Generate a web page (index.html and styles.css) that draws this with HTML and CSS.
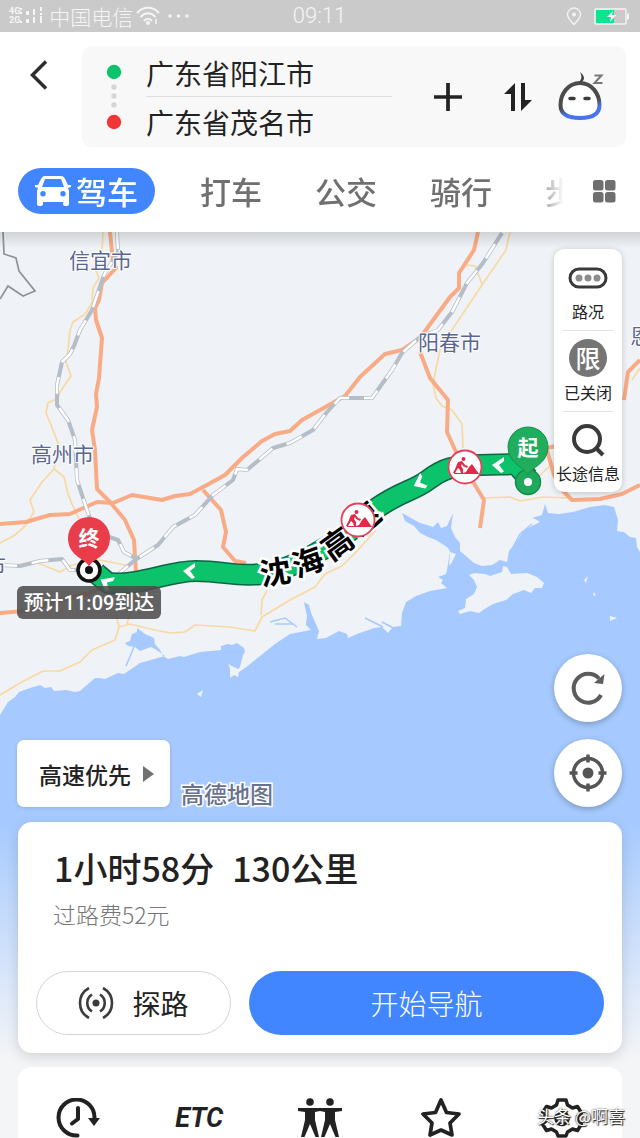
FILE: index.html
```html
<!DOCTYPE html>
<html lang="zh-CN">
<head>
<meta charset="utf-8">
<meta name="viewport" content="width=device-width, initial-scale=1">
<title>路线规划</title>
<link rel="stylesheet" href="styles.css">
</head>
<body>
<div class="status-bar">
  <div class="status-left">
    <span class="network"><span>4G</span><span>2G</span></span>
    <svg class="signal" width="23" height="18" viewBox="0 0 23 18" fill="currentColor" aria-hidden="true"><path d="M0 1h2v2H0zM0 5h2v2H0zM0 14h2v2H0zM6 4h3v4H6zM6 12h3v4H6zM13 2h2v6h-2zM13 10h2v6h-2zM20 0h2v4h-2zM20 6h2v2h-2zM20 9h2v7h-2z"/></svg>
    <span class="carrier">中国电信</span>
    <svg class="wifi" width="24" height="20" viewBox="0 0 24 20" fill="none" stroke="currentColor" stroke-width="2" aria-hidden="true"><path d="M1 7c6-7 16-7 22 0M4.500 11c4.500-5 10.500-5 15 0M8 15c2.500-3 5.500-3 8 0"/><circle cx="12" cy="17" r="1"/><path d="M20 13v5" stroke-width="1.500"/></svg>
    <svg width="22" height="4" viewBox="0 0 22 4" fill="currentColor" aria-hidden="true"><circle cx="2" cy="2" r="1.700"/><circle cx="10.500" cy="2" r="1.700"/><circle cx="19" cy="2" r="1.700"/></svg>
  </div>
  <time class="clock">09:11</time>
  <div class="status-right">
    <svg width="16" height="19" viewBox="0 0 16 19" fill="none" stroke="currentColor" stroke-width="1.300" aria-hidden="true"><path d="M8 17.500C6 15 1.500 11.500 1.500 7.500a6.500 6.500 0 0 1 13 0c0 4-4.500 7.500-6.500 10z"/><circle cx="8" cy="7.500" r="1.300" fill="currentColor"/></svg>
    <svg width="36" height="17" viewBox="0 0 36 17" aria-hidden="true"><rect x="1" y="1" width="31" height="15" rx="1" fill="none" stroke="#f5f5f5" stroke-width="1.400"/><path d="M2 2h18v13H2z" fill="#0be58f"/><path d="M34 5.500v6" stroke="#f5f5f5" stroke-width="2"/><path d="M19 3l-6 6h4l-1 5 6-7h-4z" fill="#fff"/></svg>
  </div>
</div>

<header class="header">
  <div class="search-row">
    <button class="icon-button back" aria-label="返回"><svg width="18" height="30" viewBox="0 0 18 30" fill="none" stroke="#2d2d2d" stroke-width="3.500"><path d="M16 1.500 2.500 15 16 28.500"/></svg></button>
    <div class="route-box">
      <svg class="stops" width="16" height="68" viewBox="0 0 16 68" aria-hidden="true"><circle cx="8" cy="9" r="7.200" fill="#0cc36c"/><g fill="#d6d6d6"><circle cx="8" cy="24" r="2.700"/><circle cx="8" cy="33" r="2.700"/><circle cx="8" cy="42" r="2.700"/></g><circle cx="8" cy="59" r="7.200" fill="#f33434"/></svg>
      <div class="places">
        <input type="text" aria-label="起点" value="广东省阳江市">
        <input type="text" aria-label="终点" value="广东省茂名市">
      </div>
      <div class="route-actions">
        <button class="icon-button" aria-label="添加途经点"><svg width="30" height="30" viewBox="0 0 30 30" stroke="#222" stroke-width="3.700"><path d="M1 15h28M15 1v28"/></svg></button>
        <button class="icon-button" aria-label="交换起终点"><svg width="28" height="30" viewBox="0 0 28 30" fill="#222"><path d="M11 1v28H7V12H0zM17 1h4v17h7L17 29z"/></svg></button>
        <button class="icon-button" aria-label="语音助手"><svg width="46" height="50" viewBox="0 0 46 50"><defs><linearGradient id="face" x1="0" y1="0" x2=".3" y2="1"><stop offset=".68" stop-color="#4c4c4c"/><stop offset=".9" stop-color="#4773f0"/></linearGradient></defs><path d="M22 11c12 0 19.500 11 19.500 22 0 10-8.500 13-19.500 13S2.500 43 2.500 33c0-11 7.500-22 19.500-22z" fill="#fff" stroke="url(#face)" stroke-width="4"/><path d="M21 10c3-3 3-6 1-10 5 4 5 7 2 10z" fill="#444"/><path d="M12 26.500h4M27 26.500h4" stroke="#3b3b3b" stroke-width="3.500" stroke-linecap="round"/><path d="M36.500 3.500h7l-7 7.500h8" fill="none" stroke="#777" stroke-width="2"/></svg></button>
      </div>
    </div>
  </div>
  <div class="tab-row">
    <nav class="tabs" aria-label="出行方式">
      <button class="tab active"><svg width="36" height="30" viewBox="0 0 36 30" fill="currentColor" aria-hidden="true"><path fill-rule="evenodd" d="M10 0h16c2 0 3 1 4 3l3 6h3v2l-3 1 1 3v13c0 1-1 2-2 2h-2c-1 0-2-1-2-2v-2H8v2c0 1-1 2-2 2H4c-1 0-2-1-2-2V15l1-3-3-1V9h3l3-6c1-2 2-3 4-3zm0 3L7 11h22l-3-8zM8 15a2.700 2.700 0 1 0 0 5.400 2.700 2.700 0 0 0 0-5.400zm20 0a2.700 2.700 0 1 0 0 5.400 2.700 2.700 0 0 0 0-5.400z"/></svg>驾车</button>
      <button class="tab">打车</button>
      <button class="tab">公交</button>
      <button class="tab">骑行</button>
      <button class="tab">步行</button>
    </nav>
    <button class="icon-button more" aria-label="更多出行方式"><svg width="24" height="24" viewBox="0 0 24 24" fill="#6f6f6f"><rect x="1" y="1" width="10.500" height="10.500" rx="2.500"/><rect x="13" y="1" width="10.500" height="10.500" rx="2.500"/><rect x="1" y="13" width="10.500" height="10.500" rx="2.500"/><rect x="13" y="13" width="10.500" height="10.500" rx="2.500"/></svg></button>
  </div>
</header>

<main class="map-screen">
  <svg class="map" viewBox="0 232 640 906" preserveAspectRatio="xMidYMin slice" role="img" aria-label="阳江市到茂名市的路线地图">
    <defs>
      <linearGradient id="fade" x1="0" y1="0" x2="0" y2="1"><stop offset="0" stop-color="#f4f5f7" stop-opacity="0"/><stop offset="1" stop-color="#f4f5f7"/></linearGradient>
      <linearGradient id="shade" x1="0" y1="0" x2="0" y2="1"><stop offset="0" stop-color="#000" stop-opacity=".13"/><stop offset="1" stop-color="#000" stop-opacity="0"/></linearGradient>
      <path id="chevron" fill="#fff" d="M6-8-6 0 3 8 6 6.500 1 0 6-4z"/>
      <g id="works">
        <circle r="16.500" fill="#fff" stroke="#e8405a" stroke-width="1.800"/>
        <g fill="#e02a49"><circle cx="-1.500" cy="-8" r="2"/><path d="M-7-5l4-1 3 4 3 1-1 2-4-2-1-2-1 2 2 3v4h-2l-1-3-2-2-3 5h-2l3-6zM-11 7H14L7-3 4 0 1 5-2 6h-9zM-8-3l2-1-2 5-1-1z"/></g>
      </g>
    </defs>
    <rect y="232" width="640" height="906" fill="#eff2f6"/>
    <path fill="#a6caff" d="M0 715 8 702 15 697 19 692 30 688 40 685 45 688 51 687 54 691 66 690 75 692 80 691 95 678 100 678 105 679 118 673 124 674 140 663 165 656 155 649 151 647 140 651 135 647 128 646 125 643 130 641 132 634 137 632 137 628 145 634 154 638 155 644 160 650 163 656 168 659 180 656 184 657 200 652 221 650 221 646 228 644 232 645 237 643 244 648 245 652 243 655 240 667 238 669 228 664 230 668 230 678 234 675 238 677 239 672 245 668 260 656 275 644 290 634 311 630 306 625 307 616 304 602 309 605 311 613 315 622 319 631 317 639 326 638 339 631 347 634 348 638 357 634 374 628 382 627 388 633 393 627 401 626 402 613 406 602 416 596 430 591 447 588 441 583 443 580 438 577 446 574 447 570 448 564 450 551 447 547 436 540 428 537 420 533 414 526 405 521 402 513 411 518 420 523 427 525 433 527 438 522 441 528 447 526 453 513 451 528 455 537 460 543 460 551 466 556 474 563 482 566 492 565 500 560 507 562 509 551 514 545 524 530 534 525 540 522 535 519 532 518 542 515 545 504 548 513 559 514 573 512 590 507 605 505 614 507 618 520 617 531 624 532 630 537 636 538 637 547 640 552V1138H0z"/>
    <path fill="none" stroke="#a6caff" stroke-width="1.500" d="M134 647 126 666M512 549 520 534 532 524M382 622 401 632M365 618 383 627M270 622 285 618 297 627M275 624h18"/>
    <path fill="#eff2f6" d="M450 552 456 554 452 562 449 566zM469 575 474 573 485 574 490 576 502 572 503 566 507 567 511 574 527 573 537 577 544 583 542 588 535 588 531 593 524 590 513 594 506 600 493 604 483 610 479 613 470 611 460 614 458 611 465 608 466 599 474 594 477 587 474 580zM584 580 588 576 586 583zM594 592 596 596 593 595zM610 616 617 618 610 621zM197 694 203 690 201 697z"/>
    <path fill="none" stroke="#8d9499" stroke-width="1.700" d="M3 232 4 254 16 258 19 271 35 291 23 296 8 286 0 299"/>
    <g fill="none" stroke="#f9d9a2" stroke-width="1.700" stroke-linejoin="round">
      <path d="M103 232 102 250 95 268 99 278 93 288 92 303 85 314 73 322 70 330 68 350 66 362 71 376 60 392 58 398 48 403 46 413 51 425 58 443 54 469 42 482 30 500 34 512 25 526 15 535 0 543M54 469 64 477 68 494 72 504 79 519M38 563 60 572 72 565 100 560 130 566"/>
      <path d="M0 695 20 683 43 671 60 671 80 662 92 650 115 640 119 627 130 624 150 629 170 633 185 632 195 625 230 627 255 631 262 617 290 600 315 587 325 574 342 566 358 550 375 531 380 515M261 615 262 600 270 585M119 627 115 610M127 624 136 594"/>
      <path d="M510 232 506 250 482 285 460 318 447 337 440 350 435 374 433 384 436 398 442 406 452 410 462 424 463 448M482 284 475 266 467 265M482 498 510 497 520 501 543 497 570 498M538 477 553 463M632 380 640 368"/>
    </g>
    <g fill="none" stroke="#f9ab86" stroke-width="4" stroke-linejoin="round">
      <path d="M110 232 113 262 116 268 102 283 99 300 95 308 96 320 102 338 99 378 96 394 97 407 92 430 95 450 97 489 110 502 125 520 134 540 136 573"/>
      <path d="M0 524 26 522 50 515 70 514 97 502 113 503 132 495 162 500 175 496 190 494 205 486 225 475 242 458 262 441 275 434 290 431 302 420 320 410 345 396 360 377 385 354 402 350 420 338 450 297 459 288 459 273 474 250 478 232"/>
      <path d="M420 352 430 378 448 400 447 432 456 452 469 475 484 500 480 528M203 490 221 510 226 532 223 547 235 561 246 563M0 613 25 611 50 603 90 593 104 586M640 360 628 372 624 400M537 454 547 448 556 446M547 450 554 475 563 491 572 500 600 499 622 494 640 485"/>
    </g>
    <g fill="none" stroke-linejoin="round">
      <path stroke="#b5bdc7" stroke-width="4" d="M117 232 118 252 104 275 92 310 80 330 74 346 70 354 62 362 57 385 57 405 68 420 75 440 77 480 87 510 95 532 118 540 124 552 135 558M0 565 20 566 40 561 62 559 70 570 85 570M115 577 135 560 158 545 173 527 195 515 213 495 233 480 237 469 247 470 273 448 290 443 313 430 327 412 340 398 372 398 392 370 402 353 420 337 438 330 452 312 467 283 483 263 502 233"/>
      <path stroke="#fff" stroke-width="2.500" stroke-dasharray="17 15" d="M117 232 118 252 104 275 92 310 80 330 74 346 70 354 62 362 57 385 57 405 68 420 75 440 77 480 87 510 95 532 118 540 124 552 135 558M0 565 20 566 40 561 62 559 70 570 85 570M115 577 135 560 158 545 173 527 195 515 213 495 233 480 237 469 247 470 273 448 290 443 313 430 327 412 340 398 372 398 392 370 402 353 420 337 438 330 452 312 467 283 483 263 502 233"/>
    </g>
    <g class="city">
      <text x="69" y="268">信宜市</text><text x="31" y="462">高州市</text><text x="418" y="350">阳春市</text><text x="630" y="344">恩平市</text><text x="-15" y="573">市</text>
    </g>
    <g fill="none" stroke-linejoin="round">
      <path stroke="#0c6544" stroke-width="22" d="M96 573 108 583C140 586 168 571 196 571S236 577 262 574 338 546 374 510C402 490 412 492 428 480S452 466 480 465L516 464 528 478"/>
      <path stroke="#0cc36c" stroke-width="19" d="M96 573 108 583C140 586 168 571 196 571S236 577 262 574 338 546 374 510C402 490 412 492 428 480S452 466 480 465L516 464 528 478"/>
    </g>
    <use href="#chevron" x="189" y="571"/><use href="#chevron" x="498" y="465"/>
    <use href="#chevron" transform="translate(419 483) rotate(-30)"/><use href="#chevron" transform="translate(106 582) rotate(25)"/>
    <g class="road-name">
      <text transform="translate(363 517) rotate(-40)">速</text><text transform="translate(275 570) rotate(-9)">沈</text><text transform="translate(307 560) rotate(-20)">海</text><text transform="translate(336 542) rotate(-36)">高</text>
    </g>
    <use href="#works" x="465" y="467"/><use href="#works" x="358" y="520"/>
    <g>
      <circle cx="528" cy="482" r="12.500" fill="#20a95c" stroke="#168a49" stroke-width="1.500"/>
      <path fill="#20ad5e" stroke="#15924d" d="M528 475c-3-8-20-11-20-28a20 20 0 0 1 40 0c0 17-17 20-20 28z"/>
      <circle cx="528" cy="482" r="4" fill="#fff"/>
      <text class="pin-label" x="528" y="455">起</text>
    </g>
    <g>
      <circle cx="89" cy="570" r="11" fill="#fff" stroke="#111" stroke-width="3.500"/>
      <circle cx="89" cy="570" r="4" fill="#111"/>
      <path fill="#ea3d4c" d="M89 567c-2-8-21-10-21-29a21 21 0 0 1 42 0c0 19-19 21-21 29z"/>
      <text class="pin-label" x="89" y="546">终</text>
    </g>
    <rect x="17" y="586" width="144" height="33" rx="6" fill="#4a4a4a" fill-opacity=".86"/>
    <text class="eta" x="89" y="610">预计11:09到达</text>
    <rect y="822" width="640" height="238" fill="url(#fade)"/>
    <rect y="1060" width="640" height="78" fill="#f4f5f7"/>
    <rect y="232" width="640" height="16" fill="url(#shade)"/>
  </svg>

  <div class="map-tools">
    <button><svg width="40" height="22" viewBox="0 0 40 22" aria-hidden="true"><rect x="2" y="2" width="36" height="18" rx="9" fill="#fff" stroke="#3a3a3a" stroke-width="3"/><g fill="#8d8d8d"><circle cx="11" cy="11" r="3.500"/><circle cx="20" cy="11" r="3.500"/><circle cx="29" cy="11" r="3.500"/></g></svg><span>路况</span></button>
    <button><b class="limit">限</b><span>已关闭</span></button>
    <button><svg width="34" height="34" viewBox="0 0 34 34" fill="none" stroke="#3a3a3a" stroke-width="4" aria-hidden="true"><circle cx="16" cy="16" r="13"/><path d="m25 25 7 7"/></svg><span>长途信息</span></button>
  </div>

  <div class="map-controls">
    <button class="preference">高速优先<svg width="11" height="16" viewBox="0 0 11 16" fill="#707070" aria-hidden="true"><path d="M0 0 11 8 0 16z"/></svg></button>
    <span class="map-brand">高德地图</span>
    <div class="round-buttons">
      <button aria-label="刷新路线"><svg width="36" height="36" viewBox="0 0 36 36"><path d="M31 25A14.500 14.500 0 1 1 29 8.500" fill="none" stroke="#5c5c5c" stroke-width="4"/><path d="M34.500 4 33 14l-9-1z" fill="#5c5c5c"/></svg></button>
      <button aria-label="定位"><svg width="38" height="38" viewBox="0 0 38 38" fill="none" stroke="#555" stroke-width="3.500"><circle cx="19" cy="19" r="14.500"/><circle cx="19" cy="19" r="5.500" fill="#555" stroke="none"/><path d="M19 .5v8M19 29.500v8M.5 19h8M29.500 19h8"/></svg></button>
    </div>
  </div>

  <section class="summary">
    <h1><span>1小时58分</span><span>130公里</span></h1>
    <p>过路费52元</p>
    <div class="actions">
      <button class="explore"><svg width="36" height="32" viewBox="0 0 36 32" fill="none" stroke="#3c3c3c" stroke-width="2.600" aria-hidden="true"><circle cx="18" cy="16" r="3.500" fill="#3c3c3c" stroke="none"/><path d="M14 7.500a10 10 0 0 0 0 17M22 7.500a10 10 0 0 1 0 17M11 1a17 17 0 0 0 0 30M25 1a17 17 0 0 1 0 30"/></svg>探路</button>
      <button class="start">开始导航</button>
    </div>
  </section>

  <nav class="shortcuts" aria-label="快捷功能">
    <button aria-label="出发时间"><svg width="44" height="40" viewBox="0 0 44 40"><path d="M21.500 37.500A18 18 0 1 1 38.500 20" fill="none" stroke="#222" stroke-width="4" stroke-linecap="round"/><path d="M32 20h12l-6 8z" fill="#222"/><path d="M22 10v11l-6 4.500" fill="none" stroke="#222" stroke-width="4" stroke-linecap="round" stroke-linejoin="round"/></svg></button>
    <button class="etc">ETC</button>
    <button aria-label="同行"><svg width="44" height="40" viewBox="0 0 44 40" fill="#222"><circle cx="12" cy="4" r="3.800"/><circle cx="32" cy="4" r="3.800"/><path d="M0 10h44v3l-7 1v8l4 17h-3.500L32 26l-5.500 13H23l4-17v-8l-5-1-5 1v8l4 17h-3.500L12 26 6.500 39H3l4-17v-8l-7-1z"/></svg></button>
    <button aria-label="收藏"><svg width="42" height="40" viewBox="0 0 42 40" fill="none" stroke="#222" stroke-width="3.700" stroke-linejoin="round"><path d="m21 2 5.500 12.500L39 16l-9 9 2 12-11-5-11 5 2-12-9-9 12.500-1.500z"/></svg></button>
    <button class="settings" aria-label="设置"><svg width="42" height="40" viewBox="0 0 42 40" fill="none" stroke="#222" stroke-width="3.500" stroke-linejoin="round"><path d="M17 2h8l1.500 5 5 3 5-1.500 4 6.500-4 3.500v4l4 3.500-4 6.500-5-1.500-5 3L25 38h-8l-1.500-4-5-3-5 1.500-4-6.500 4-3.500v-4L1.500 15l4-6.500 5 1.500 5-3z"/><circle cx="21" cy="20.500" r="6"/></svg></button>
    <span class="watermark">头条 @啊喜</span>
  </nav>
</main>
</body>
</html>
```
FILE: styles.css
```css
* { box-sizing: border-box; }

body {
  margin: 0;
  min-height: 100vh;
  display: flex;
  flex-direction: column;
  background: #fff;
  color: #222;
  font-family: Roboto, "Noto Sans CJK SC", sans-serif;
}

button, input {
  font: inherit;
  color: inherit;
  border: 0;
  padding: 0;
  background: none;
}

svg { flex: none; }
.icon-button { display: flex; }

.status-bar {
  height: 32px;
  padding: 0 10px 0 9px;
  display: grid;
  grid-template-columns: 1fr auto 1fr;
  align-items: center;
  background: #cacaca;
  color: #f5f5f5;
}
.status-left { display: flex; align-items: center; }
.network { display: grid; font-size: 9px; line-height: 9px; font-weight: 700; }
.carrier { margin-left: 6px; font-family: "Noto Sans CJK SC", sans-serif; font-size: 21px; line-height: 30px; font-weight: 300; }
.wifi { margin: 0 8px 0 3px; }
.clock { font-size: 22px; line-height: 32px; font-weight: 300; }
.status-right { display: flex; justify-content: flex-end; align-items: center; gap: 12px; }

.header { padding: 14px 14px 18px 18px; }
.search-row { display: flex; align-items: flex-start; }
.back { width: 64px; padding: 14px 0 0 12px; }
.route-box {
  flex: 1;
  height: 101px;
  padding: 0 22px 0 24px;
  display: flex;
  align-items: center;
  background: #f8f8f8;
  border-radius: 10px;
}
.places { flex: 1; max-width: 246px; margin-left: 24px; display: grid; }
.places input {
  width: 100%;
  min-width: 0;
  height: 50px;
  font-family: "Noto Sans CJK SC", sans-serif;
  font-size: 28px;
  line-height: 40px;
}
.places input:first-child { padding-top: 3px; border-bottom: 1px solid #dedede; }
.route-actions { margin-left: auto; display: flex; align-items: center; gap: 26px; }
.route-actions button:first-child { margin-right: 15px; }

.tab-row { display: flex; align-items: center; margin-top: 21px; }
.tabs {
  flex: 1;
  min-width: 0;
  display: flex;
  gap: 45px;
  overflow: hidden;
  mask-image: linear-gradient(90deg, #000 calc(100% - 32px), transparent);
}
.tab {
  flex: none;
  height: 46px;
  padding-right: 8px;
  display: flex;
  align-items: center;
  gap: 5px;
  font-family: "Noto Sans CJK SC", sans-serif;
  font-size: 31px;
  line-height: 46px;
  font-weight: 500;
  color: #707070;
}
.tab.active { padding: 0 17px; border-radius: 23px; background: #4286ff; color: #fff; }
.more { padding: 0 10px 0 28px; }

.map-screen {
  position: relative;
  flex: 1;
  min-height: 800px;
  padding: 17px 18px 0;
  display: flex;
  flex-direction: column;
  overflow: hidden;
  font-family: "Noto Sans CJK SC", sans-serif;
}
.map { position: absolute; inset: 0; width: 100%; height: 100%; }
.map-screen > :not(.map) { position: relative; }

.city { font-size: 21px; fill: #596691; stroke: #fff; stroke-width: 2px; paint-order: stroke; }
.road-name text {
  font-size: 31px;
  font-weight: 700;
  text-anchor: middle;
  dominant-baseline: central;
  fill: #000;
  stroke: #fff;
  stroke-width: 5px;
  paint-order: stroke;
}
.pin-label { font-size: 21px; font-weight: 700; text-anchor: middle; fill: #fff; }
.eta { font-family: Roboto, "Noto Sans CJK SC", sans-serif; font-size: 20px; font-weight: 500; text-anchor: middle; fill: #fff; }

.map-tools {
  align-self: flex-end;
  width: 68px;
  border-radius: 10px;
  background: #fff;
  box-shadow: 0 1px 6px #0003;
}
.map-tools button {
  width: 100%;
  height: 81px;
  padding-bottom: 7px;
  display: flex;
  flex-direction: column;
  align-items: center;
  justify-content: flex-end;
  gap: 10px;
  font-size: 16px;
  line-height: 24px;
}
.map-tools button:nth-child(2) { gap: 3px; }
.map-tools button:nth-child(3) { gap: 4px; }
.map-tools button + button { background: linear-gradient(#e3e3e3, #e3e3e3) center top / 50px 1px no-repeat; }
.map-tools span { white-space: nowrap; }
.limit {
  width: 38px;
  height: 38px;
  border-radius: 50%;
  background: #757575;
  color: #fff;
  font-size: 25px;
  line-height: 37px;
  font-weight: 500;
  text-align: center;
}

.map-controls { margin-top: auto; display: flex; align-items: flex-end; }
.preference {
  height: 67px;
  margin-left: -1px;
  padding: 0 16px 0 22px;
  display: flex;
  align-items: center;
  gap: 12px;
  border-radius: 7px;
  background: #fff;
  box-shadow: 0 1px 4px #0002;
  font-size: 23px;
  font-weight: 500;
}
.map-brand {
  margin-left: 11px;
  font-size: 23px;
  line-height: 28px;
  font-weight: 500;
  color: #69728c;
  -webkit-text-stroke: 3px #fff;
  paint-order: stroke fill;
}
.round-buttons { margin-left: auto; display: grid; gap: 17px; }
.round-buttons button {
  width: 68px;
  height: 68px;
  display: grid;
  place-items: center;
  border-radius: 50%;
  background: #fff;
  box-shadow: 0 2px 6px #0004;
}

.summary {
  margin: 15px 0 14px;
  padding: 23px 18px 18px;
  border-radius: 14px;
  background: #fff;
  box-shadow: 0 4px 14px #0002;
}
.summary h1 {
  margin: 0;
  padding-left: 18px;
  display: flex;
  gap: 18px;
  font-size: 34px;
  line-height: 46px;
  font-weight: 500;
}
.summary p { margin: 7px 0 0; padding-left: 17px; font-size: 23px; line-height: 32px; font-weight: 300; color: #777; }
.actions { display: grid; grid-template-columns: 195fr 355fr; gap: 18px; margin-top: 41px; }
.actions button { height: 64px; border-radius: 32px; font-size: 28px; }
.actions .explore { display: flex; align-items: center; justify-content: center; gap: 18px; border: 1px solid #d5d5d5; }
.start { background: #4286ff; color: #fff; font-weight: 300; }

.shortcuts {
  height: 71px;
  padding-top: 30px;
  display: grid;
  grid-template-columns: repeat(5, 1fr);
  border-radius: 14px 14px 0 0;
  background: #fff;
}
.shortcuts button { display: grid; place-items: center; }
.shortcuts .etc { font-family: "Liberation Sans Narrow", Roboto, sans-serif; font-size: 27px; line-height: 40px; font-weight: 700; font-style: italic; }
.watermark {
  position: absolute;
  right: -3px;
  bottom: 8px;
  color: #fff;
  font-size: 17px;
  line-height: 28px;
  text-shadow: 1px 1px 1px #222, 0 0 2px #333;
}
```
